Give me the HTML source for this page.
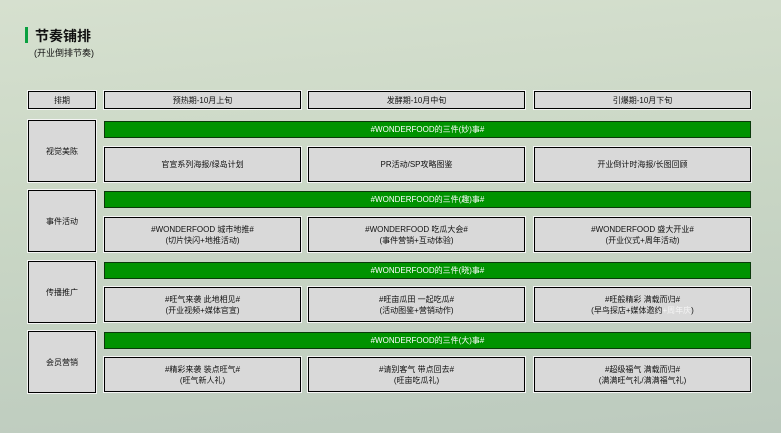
<!DOCTYPE html>
<html><head><meta charset="utf-8"><style>
body{margin:0;width:781px;height:433px;overflow:hidden;font-family:"Liberation Sans","Noto Sans CJK SC",sans-serif;background:linear-gradient(175deg,#d6e0cf 0%,#cbd8c6 40%,#bccabe 100%);position:relative}
.b{position:absolute;box-sizing:border-box;background:#d9d9d9;border:1px solid #000;box-shadow:0 0 0 1px #f4f4f4;display:flex;align-items:center;justify-content:center;text-align:center;font-size:8px;line-height:11px;color:#111}
.g{position:absolute;box-sizing:border-box;background:#009300;border:1px solid #0a3a0a;color:#fff;display:flex;align-items:center;justify-content:center;font-size:8px;left:104px;width:647px;height:17px}
</style></head><body>
<div style="position:absolute;left:25px;top:27px;width:3px;height:16px;background:#0aa040"></div>
<div style="position:absolute;left:35px;top:26px;font-size:14px;font-weight:bold;color:#111">节奏铺排</div>
<div style="position:absolute;left:34px;top:46px;font-size:9px;color:#111">(开业倒排节奏)</div>

<div class="b" style="left:28px;top:91px;width:68px;height:18px">排期</div>
<div class="b" style="left:104px;top:91px;width:197px;height:18px">预热期-10月上旬</div>
<div class="b" style="left:308px;top:91px;width:217px;height:18px">发酵期-10月中旬</div>
<div class="b" style="left:534px;top:91px;width:217px;height:18px">引爆期-10月下旬</div>

<div class="b" style="left:28px;top:120px;width:68px;height:62px">视觉美陈</div>
<div class="g" style="top:121px">#WONDERFOOD的三件(妙)事#</div>
<div class="b" style="left:104px;top:147px;width:197px;height:35px">官宣系列海报/绿岛计划</div>
<div class="b" style="left:308px;top:147px;width:217px;height:35px">PR活动/SP攻略图鉴</div>
<div class="b" style="left:534px;top:147px;width:217px;height:35px">开业倒计时海报/长图回顾</div>

<div class="b" style="left:28px;top:190px;width:68px;height:62px">事件活动</div>
<div class="g" style="top:191px">#WONDERFOOD的三件(趣)事#</div>
<div class="b" style="left:104px;top:217px;width:197px;height:35px"><div>#WONDERFOOD 城市地推#<br>(切片快闪+地推活动)</div></div>
<div class="b" style="left:308px;top:217px;width:217px;height:35px"><div>#WONDERFOOD 吃瓜大会#<br>(事件营销+互动体验)</div></div>
<div class="b" style="left:534px;top:217px;width:217px;height:35px"><div>#WONDERFOOD 盛大开业#<br>(开业仪式+周年活动)</div></div>

<div class="b" style="left:28px;top:261px;width:68px;height:62px">传播推广</div>
<div class="g" style="top:262px">#WONDERFOOD的三件(晓)事#</div>
<div class="b" style="left:104px;top:287px;width:197px;height:35px"><div>#旺气来袭 此地相见#<br>(开业视频+媒体官宣)</div></div>
<div class="b" style="left:308px;top:287px;width:217px;height:35px"><div>#旺亩瓜田 一起吃瓜#<br>(活动图鉴+营销动作)</div></div>
<div class="b" style="left:534px;top:287px;width:217px;height:35px"><div>#旺般精彩 满载而归#<br>(早鸟探店+媒体邀约<span style="color:#f4f4f4">+周年庆</span>)</div></div>

<div class="b" style="left:28px;top:331px;width:68px;height:62px">会员营销</div>
<div class="g" style="top:332px">#WONDERFOOD的三件(大)事#</div>
<div class="b" style="left:104px;top:357px;width:197px;height:35px"><div>#精彩来袭 装点旺气#<br>(旺气新人礼)</div></div>
<div class="b" style="left:308px;top:357px;width:217px;height:35px"><div>#请别客气 带点回去#<br>(旺亩吃瓜礼)</div></div>
<div class="b" style="left:534px;top:357px;width:217px;height:35px"><div>#超级福气 满载而归#<br>(满满旺气礼/满满福气礼)</div></div>
</body></html>
